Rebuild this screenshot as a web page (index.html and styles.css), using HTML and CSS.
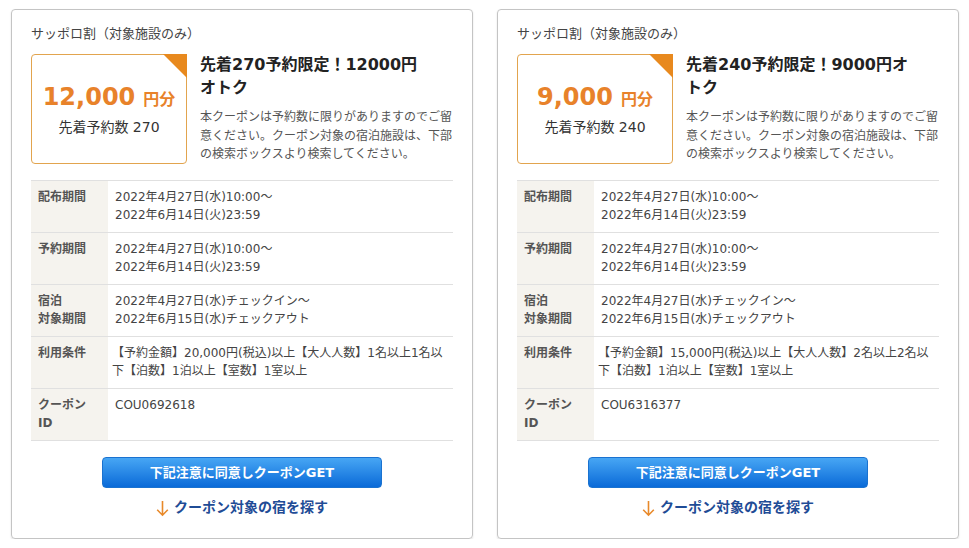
FILE: index.html
```html
<!doctype html>
<html lang="ja">
<head>
	<meta charset="UTF-8">
	<meta name="viewport" content="width=device-width, initial-scale=1.0">
	<title>サッポロ割クーポン</title>
	<link rel="stylesheet" href="styles.css">
</head>
<body>
	<div class="couponList">
		<div class="coupon">
			<p class="couponName">サッポロ割（対象施設のみ）</p>
			<div class="couponHead">
				<div class="couponTicket">
					<p class="ticketPrice">12,000<span>円分</span></p>
					<p class="ticketCount">先着予約数 270</p>
				</div>
				<div class="couponDesc">
					<h2>先着270予約限定！12000円オトク</h2>
					<p>本クーポンは予約数に限りがありますのでご留意ください。クーポン対象の宿泊施設は、下部の検索ボックスより検索してください。</p>
				</div>
			</div>
			<table class="couponTable">
				<tr><th>配布期間</th><td>2022年4月27日(水)10:00～<br>2022年6月14日(火)23:59</td></tr>
				<tr><th>予約期間</th><td>2022年4月27日(水)10:00～<br>2022年6月14日(火)23:59</td></tr>
				<tr><th>宿泊<br>対象期間</th><td>2022年4月27日(水)チェックイン～<br>2022年6月15日(水)チェックアウト</td></tr>
				<tr><th>利用条件</th><td class="cond">【予約金額】20,000円(税込)以上【大人人数】1名以上1名以下【泊数】1泊以上【室数】1室以上</td></tr>
				<tr><th>クーポン<br>ID</th><td>COU0692618</td></tr>
			</table>
			<a class="getBtn" href="#">下記注意に同意しクーポンGET</a>
			<a class="searchLink" href="#">
				<svg width="13" height="17" viewBox="0 0 13 17"><path d="M6.5 1v14M1.2 9.8l5.3 5.4 5.3-5.4" fill="none" stroke="#e8892a" stroke-width="1.6"/></svg>
				クーポン対象の宿を探す
			</a>
		</div>
		<div class="coupon">
			<p class="couponName">サッポロ割（対象施設のみ）</p>
			<div class="couponHead">
				<div class="couponTicket">
					<p class="ticketPrice">9,000<span>円分</span></p>
					<p class="ticketCount">先着予約数 240</p>
				</div>
				<div class="couponDesc">
					<h2>先着240予約限定！9000円オトク</h2>
					<p>本クーポンは予約数に限りがありますのでご留意ください。クーポン対象の宿泊施設は、下部の検索ボックスより検索してください。</p>
				</div>
			</div>
			<table class="couponTable">
				<tr><th>配布期間</th><td>2022年4月27日(水)10:00～<br>2022年6月14日(火)23:59</td></tr>
				<tr><th>予約期間</th><td>2022年4月27日(水)10:00～<br>2022年6月14日(火)23:59</td></tr>
				<tr><th>宿泊<br>対象期間</th><td>2022年4月27日(水)チェックイン～<br>2022年6月15日(水)チェックアウト</td></tr>
				<tr><th>利用条件</th><td class="cond">【予約金額】15,000円(税込)以上【大人人数】2名以上2名以下【泊数】1泊以上【室数】1室以上</td></tr>
				<tr><th>クーポン<br>ID</th><td>COU6316377</td></tr>
			</table>
			<a class="getBtn" href="#">下記注意に同意しクーポンGET</a>
			<a class="searchLink" href="#">
				<svg width="13" height="17" viewBox="0 0 13 17"><path d="M6.5 1v14M1.2 9.8l5.3 5.4 5.3-5.4" fill="none" stroke="#e8892a" stroke-width="1.6"/></svg>
				クーポン対象の宿を探す
			</a>
		</div>
	</div>
</body>
</html>
```

FILE: styles.css
```css
html, body, div, p, h2, table, th, td, a {
	margin: 0;
	padding: 0;
	font-family: "DejaVu Sans", "Noto Sans CJK JP", sans-serif;
	font-size: 100%;
}
body {
	background-color: #fff;
	color: #444;
}
.couponList {
	display: flex;
	gap: 24px;
	padding: 9px 0 0 11px;
}
.coupon {
	box-sizing: border-box;
	width: 462px;
	height: 530px;
	padding: 14px 19px 0;
	border: 1px solid #c4c4c4;
	border-radius: 4px;
	box-shadow: 0 1px 2px rgba(0,0,0,.12);
	display: flex;
	flex-direction: column;
}
.couponName {
	font-size: 13px;
	line-height: 20px;
	color: #444;
}
.couponHead {
	display: flex;
	gap: 13px;
	margin-top: 10px;
}
.couponTicket {
	position: relative;
	box-sizing: border-box;
	flex: none;
	width: 156px;
	height: 110px;
	padding-top: 27px;
	border: 1px solid #e2a44e;
	border-radius: 4px;
	text-align: center;
}
.couponTicket:after {
	content: '';
	position: absolute;
	top: -1px;
	right: -1px;
	width: 24px;
	height: 24px;
	background-color: #e8891e;
	clip-path: polygon(0 0, 100% 0, 100% 100%);
}
.ticketPrice {
	font-size: 24px;
	line-height: 30px;
	font-weight: bold;
	color: #e8822a;
}
.ticketPrice span {
	margin-left: 8px;
	font-size: 16px;
}
.ticketCount {
	margin-top: 2px;
	font-size: 14px;
	line-height: 20px;
	color: #333;
}
.couponDesc {
	width: 253px;
	margin-top: -1px;
}
.couponDesc h2 {
	width: 228px;
	font-size: 16px;
	line-height: 23px;
	font-weight: bold;
	color: #222;
}
.couponDesc p {
	margin-top: 9px;
	font-size: 12px;
	line-height: 18.5px;
	color: #555;
}
.couponTable {
	width: 100%;
	margin-top: 16px;
	border-collapse: collapse;
	font-size: 12px;
	line-height: 18px;
}
.couponTable th, .couponTable td {
	height: 36px;
	padding: 7px 4px 8px 7px;
	border-top: 1px solid #e0e0e0;
	border-bottom: 1px solid #e0e0e0;
	text-align: left;
	vertical-align: top;
}
.couponTable th {
	width: 66px;
	font-weight: bold;
	color: #555;
	background-color: #f5f3ee;
}
.couponTable td {
	color: #444;
}
.couponTable .cond {
	padding-left: 4px;
}
.getBtn {
	display: block;
	box-sizing: border-box;
	width: 280px;
	height: 31px;
	margin: 16px auto 0;
	border: 1px solid #1a72d0;
	border-radius: 4px;
	background: linear-gradient(#47a6f4, #0a6ad8);
	font-size: 13px;
	line-height: 29px;
	font-weight: bold;
	text-align: center;
	color: #fff;
	text-decoration: none;
}
.searchLink {
	display: flex;
	align-items: center;
	justify-content: center;
	gap: 5px;
	margin-top: 9px;
	font-size: 14px;
	line-height: 20px;
	font-weight: bold;
	color: #1f4c96;
	text-decoration: none;
}
.searchLink svg {
	margin-top: 3px;
}
```
